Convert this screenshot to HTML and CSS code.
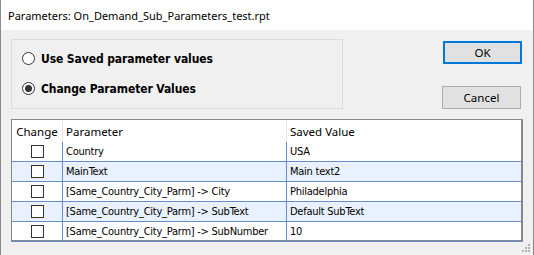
FILE: index.html
```html
<!DOCTYPE html>
<html lang="en">
<head>
    <meta charset="UTF-8" />
    <title>Parameters: On_Demand_Sub_Parameters_test.rpt</title>
    <link rel="stylesheet" href="styles.css">
</head>
<body>
    <div class="window">
        <!-- Title bar -->
        <div class="title-bar">Parameters: On_Demand_Sub_Parameters_test.rpt</div>

        <div class="content">
            <div class="top-row">
                <!-- Choice of parameter values -->
                <div class="group-box">
                    <label class="radio-row">
                        <span class="radio"></span>
                        <span>Use Saved parameter values</span>
                    </label>
                    <label class="radio-row">
                        <span class="radio checked"></span>
                        <span>Change Parameter Values</span>
                    </label>
                </div>

                <div class="buttons">
                    <button class="btn btn-default">OK</button>
                    <button class="btn">Cancel</button>
                </div>
            </div>

            <!-- Parameter list -->
            <div class="grid">
                <div class="grid-head">
                    <div class="cell center">Change</div>
                    <div class="cell">Parameter</div>
                    <div class="cell">Saved Value</div>
                </div>
                <div class="grid-row">
                    <div class="cell center"><span class="check"></span></div>
                    <div class="cell">Country</div>
                    <div class="cell">USA</div>
                </div>
                <div class="grid-row alt">
                    <div class="cell center"><span class="check"></span></div>
                    <div class="cell">MainText</div>
                    <div class="cell">Main text2</div>
                </div>
                <div class="grid-row">
                    <div class="cell center"><span class="check"></span></div>
                    <div class="cell">[Same_Country_City_Parm] -&gt; City</div>
                    <div class="cell">Philadelphia</div>
                </div>
                <div class="grid-row alt">
                    <div class="cell center"><span class="check"></span></div>
                    <div class="cell">[Same_Country_City_Parm] -&gt; SubText</div>
                    <div class="cell">Default SubText</div>
                </div>
                <div class="grid-row">
                    <div class="cell center"><span class="check"></span></div>
                    <div class="cell">[Same_Country_City_Parm] -&gt; SubNumber</div>
                    <div class="cell">10</div>
                </div>
            </div>
        </div>

        <!-- Resize grip -->
        <svg class="grip" width="9" height="9" viewBox="0 0 9 9">
            <rect x="6" y="0" width="2" height="2" fill="#b4b4b4" />
            <rect x="3" y="3" width="2" height="2" fill="#b4b4b4" />
            <rect x="6" y="3" width="2" height="2" fill="#b4b4b4" />
            <rect x="0" y="6" width="2" height="2" fill="#b4b4b4" />
            <rect x="3" y="6" width="2" height="2" fill="#b4b4b4" />
            <rect x="6" y="6" width="2" height="2" fill="#b4b4b4" />
        </svg>
    </div>
</body>
</html>
```

FILE: styles.css
```css
:root {
    --window-bg: #f0f0f0;
    --row-line: #6b8bd0;
    --row-alt: #e8f1fd;
    --text-color: #000;
    --ui-font: 'Noto Sans', 'Open Sans', sans-serif;
    --grid-font: 'DejaVu Sans Condensed', 'DejaVu Sans', sans-serif;
}

* {
    margin: 0;
    padding: 0;
    box-sizing: border-box;
}

body {
    width: 534px;
    height: 255px;
    overflow: hidden;
    background: var(--window-bg);
    font-family: var(--ui-font);
    color: var(--text-color);
}

.window {
    position: relative;
    width: 534px;
    height: 255px;
    border-left: 1px solid #8c8c8c;
    border-right: 1px solid #8c8c8c;
    background: var(--window-bg);
}

.title-bar {
    height: 30px;
    background: #fff;
    font-size: 11px;
    line-height: 31px;
    padding-left: 7px;
    color: #000;
}

.content {
    padding: 9px 11px 0 10px;
}

.top-row {
    display: flex;
    justify-content: space-between;
    height: 70px;
}

.group-box {
    width: 332px;
    height: 70px;
    border: 1px solid #dcdcdc;
    display: flex;
    flex-direction: column;
    padding: 12px 0 0 10px;
    gap: 17px;
}

.radio-row {
    display: flex;
    align-items: center;
    gap: 6px;
    height: 13px;
    font-family: 'DejaVu Sans Condensed', 'DejaVu Sans', sans-serif;
    font-weight: bold;
    font-size: 12px;
    letter-spacing: -0.1px;
    color: #000;
}

.radio {
    width: 13px;
    height: 13px;
    border: 1px solid #333;
    border-radius: 50%;
    background: #fff;
    display: flex;
    align-items: center;
    justify-content: center;
}

.radio.checked::after {
    content: '';
    width: 7px;
    height: 7px;
    border-radius: 50%;
    background: #333;
}

.buttons {
    width: 80px;
    display: flex;
    flex-direction: column;
    justify-content: space-between;
    padding: 2px 1px 0 0;
}

.btn {
    width: 79px;
    height: 23px;
    background: #e1e1e1;
    border: 1px solid #adadad;
    font-family: var(--ui-font);
    font-size: 11.5px;
    color: #000;
}

.btn-default {
    border: 2px solid #0078d7;
    margin-left: 1px;
}

.grid {
    margin-top: 10px;
    width: 512px;
    height: 123px;
    border: 1px solid #828790;
    border-bottom-width: 2px;
    border-right-width: 2px;
    background: #fff;
    font-family: var(--grid-font);
    font-size: 11px;
    letter-spacing: -0.25px;
}

.grid-head,
.grid-row {
    display: grid;
    grid-template-columns: 50px 224px 1fr;
}

.grid-head {
    height: 22px;
    font-family: var(--ui-font);
    font-size: 11.5px;
    letter-spacing: 0;
}

.grid-head .cell + .cell {
    border-left: 1px solid #e5e5e5;
}

.grid-row {
    height: 20px;
    border-bottom: 1px solid var(--row-line);
}

.grid-row .cell + .cell {
    border-left: 1px solid var(--row-line);
}

.grid-row.alt {
    background: var(--row-alt);
}

.cell {
    display: flex;
    align-items: center;
    padding-left: 3px;
    white-space: nowrap;
    overflow: hidden;
}

.cell.center {
    justify-content: center;
    padding-left: 0;
}

.check {
    width: 13px;
    height: 13px;
    border: 1px solid #333;
    background: #fff;
}

.grip {
    position: absolute;
    right: 2px;
    bottom: 2px;
}
```
